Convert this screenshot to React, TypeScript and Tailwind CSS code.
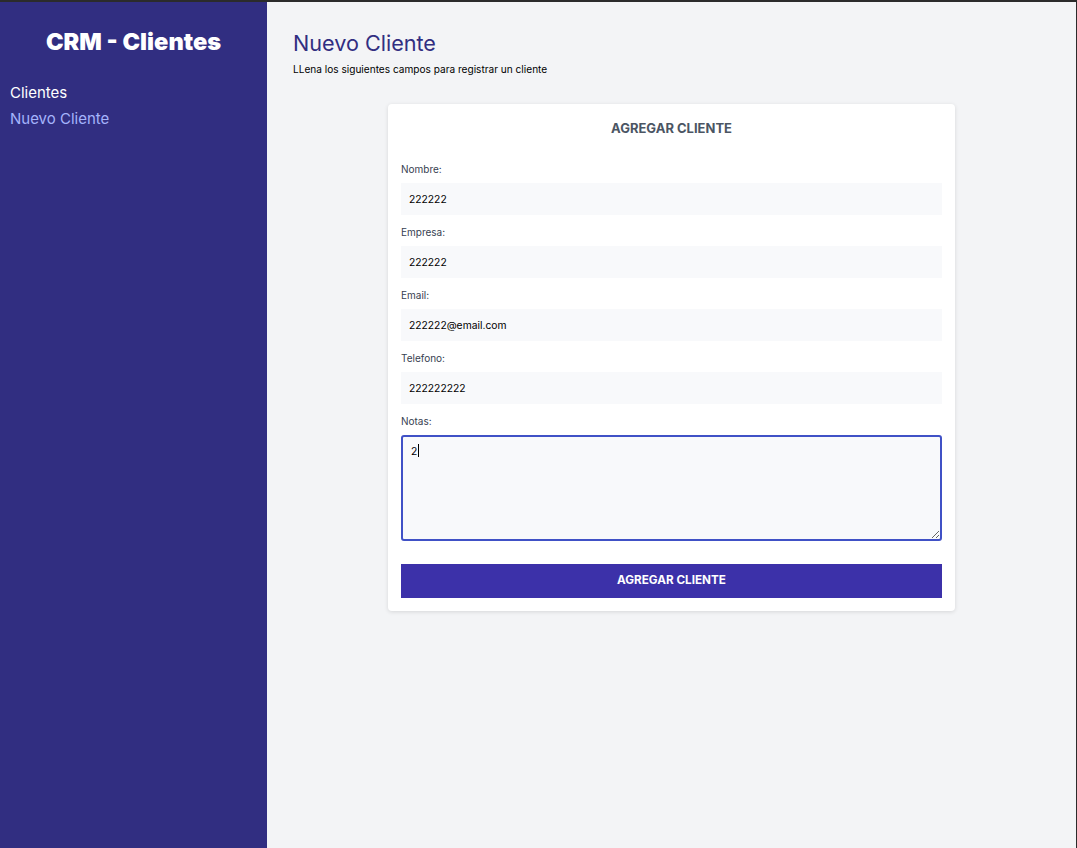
import React from "react";

const fields = [
  { label: "Nombre:", value: "222222" },
  { label: "Empresa:", value: "222222" },
  { label: "Email:", value: "222222@email.com" },
  { label: "Telefono:", value: "222222222" },
];

export default function App() {
  return (
    <div
      className="w-[1077px] h-[848px] flex border-t-2 border-t-[#2b2b2b] border-r border-r-[#2b2b2b] overflow-hidden"
      style={{ fontFamily: "Inter, 'Noto Sans', sans-serif" }}
    >
      <aside className="w-[267px] shrink-0 bg-[#312e81] flex flex-col">
        <h1 className="text-white font-black text-[23.6px] text-center mt-[26px] leading-[28px]">
          CRM - Clientes
        </h1>
        <nav className="flex flex-col mt-[27px] px-[10px] gap-[6px] text-[15px] leading-[20px]">
          <a className="text-white">Clientes</a>
          <a className="text-[#a5b4fc]">Nuevo Cliente</a>
        </nav>
      </aside>
      <main className="flex-1 bg-[#f3f4f6] pl-[26px] pr-[26px] pt-[27px]">
        <h2 className="text-[#312e81] text-[21.6px] leading-[28px]">Nuevo Cliente</h2>
        <p className="text-[10.1px] leading-[14px] text-black mt-[5px]">
          LLena los siguientes campos para registrar un cliente
        </p>
        <div className="flex justify-center mt-[28px]">
          <div className="w-[567px] bg-white rounded-[4px] shadow-[0_1px_4px_rgba(0,0,0,0.12)] px-[13px] pt-[17px] pb-[13px]">
            <h3 className="text-center text-[13px] leading-[14px] font-bold text-[#4b5563]">
              AGREGAR CLIENTE
            </h3>
            <form className="mt-[27px] flex flex-col">
              {fields.map((f) => (
                <div key={f.label} className="flex flex-col mb-[10px]">
                  <label className="text-[10px] leading-[14px] text-[#374151]">{f.label}</label>
                  <input
                    readOnly
                    value={f.value}
                    className="mt-[7px] h-[32px] bg-[#f8f9fb] px-[8px] text-[10.3px] text-black outline-none"
                  />
                </div>
              ))}
              <div className="flex flex-col">
                <label className="text-[10px] leading-[14px] text-[#374151]">Notas:</label>
                <div className="relative mt-[7px]">
                  <textarea
                    readOnly
                    value="2"
                    className="block w-full h-[106px] bg-[#f8f9fb] border-2 border-[#4051c6] rounded-[3px] px-[8px] pt-[7px] text-[10.3px] text-black outline-none resize-y"
                  />
                  <span className="absolute left-[17px] top-[9px] w-px h-[13px] bg-black" />
                </div>
              </div>
              <button
                type="button"
                className="mt-[23px] h-[34px] bg-[#3c31a9] text-white text-[11.7px] font-bold"
              >
                AGREGAR CLIENTE
              </button>
            </form>
          </div>
        </div>
      </main>
    </div>
  );
}
